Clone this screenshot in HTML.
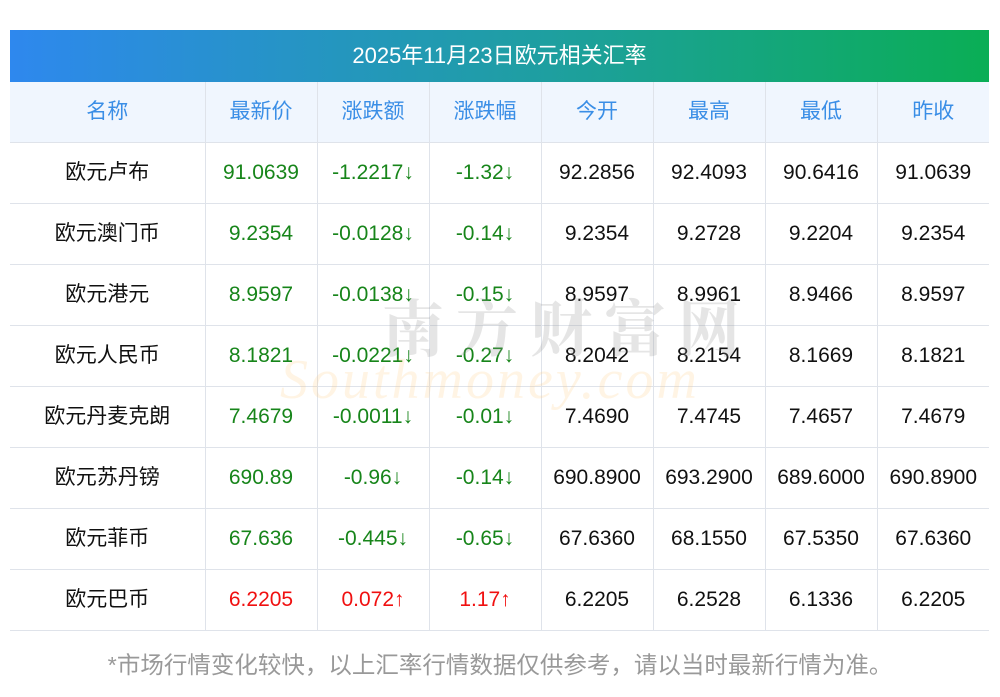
<!DOCTYPE html>
<html><head><meta charset="utf-8"><style>
body{margin:0;background:#fff;width:1000px;height:697px;overflow:hidden;font-family:"Liberation Sans","Noto Sans CJK SC",sans-serif;position:relative}
.hd{position:absolute;left:10px;top:30px;width:979px;height:52px;background:linear-gradient(90deg,#2e88ee,#1e9fa0 55%,#0aae55);color:#fff;font-size:22px;line-height:52px;text-align:center}
table{position:absolute;left:10px;top:82px;border-collapse:collapse;width:979px;table-layout:fixed}
td{height:60px;border:1px solid #dfe3ea;text-align:center;font-size:21px;line-height:24px;padding:0;color:#111;white-space:nowrap}
tr:first-child td{background:#f0f6fe;color:#3a8ee6;border-top:none}
td:first-child{border-left:none}td:last-child{border-right:none}
.g{color:#17851a}.r{color:#f01010}
.wm{position:absolute;left:382px;top:290px;font-size:62px;line-height:70px;color:rgba(150,150,150,.25);letter-spacing:12px;font-family:"Noto Serif CJK SC",serif;font-weight:bold}
.wm2{position:absolute;left:280px;top:345px;font-size:56px;line-height:70px;color:rgba(255,200,120,.2);font-style:italic;font-family:"Liberation Serif",serif;letter-spacing:3px}
.ft{position:absolute;left:0;width:1000px;top:650px;text-align:center;color:#999;font-size:23.5px;line-height:30px}
</style></head><body>
<div class="hd">2025年11月23日欧元相关汇率</div>
<table>
<colgroup><col style="width:195px"><col style="width:112px"><col style="width:112px"><col style="width:112px"><col style="width:112px"><col style="width:112px"><col style="width:112px"><col style="width:112px"></colgroup>
<tr><td>名称</td><td>最新价</td><td>涨跌额</td><td>涨跌幅</td><td>今开</td><td>最高</td><td>最低</td><td>昨收</td></tr>
<tr><td>欧元卢布</td><td class="g">91.0639</td><td class="g">-1.2217↓</td><td class="g">-1.32↓</td><td>92.2856</td><td>92.4093</td><td>90.6416</td><td>91.0639</td></tr>
<tr><td>欧元澳门币</td><td class="g">9.2354</td><td class="g">-0.0128↓</td><td class="g">-0.14↓</td><td>9.2354</td><td>9.2728</td><td>9.2204</td><td>9.2354</td></tr>
<tr><td>欧元港元</td><td class="g">8.9597</td><td class="g">-0.0138↓</td><td class="g">-0.15↓</td><td>8.9597</td><td>8.9961</td><td>8.9466</td><td>8.9597</td></tr>
<tr><td>欧元人民币</td><td class="g">8.1821</td><td class="g">-0.0221↓</td><td class="g">-0.27↓</td><td>8.2042</td><td>8.2154</td><td>8.1669</td><td>8.1821</td></tr>
<tr><td>欧元丹麦克朗</td><td class="g">7.4679</td><td class="g">-0.0011↓</td><td class="g">-0.01↓</td><td>7.4690</td><td>7.4745</td><td>7.4657</td><td>7.4679</td></tr>
<tr><td>欧元苏丹镑</td><td class="g">690.89</td><td class="g">-0.96↓</td><td class="g">-0.14↓</td><td>690.8900</td><td>693.2900</td><td>689.6000</td><td>690.8900</td></tr>
<tr><td>欧元菲币</td><td class="g">67.636</td><td class="g">-0.445↓</td><td class="g">-0.65↓</td><td>67.6360</td><td>68.1550</td><td>67.5350</td><td>67.6360</td></tr>
<tr><td>欧元巴币</td><td class="r">6.2205</td><td class="r">0.072↑</td><td class="r">1.17↑</td><td>6.2205</td><td>6.2528</td><td>6.1336</td><td>6.2205</td></tr>
</table>
<div class="wm">南方财富网</div>
<div class="wm2">Southmoney.com</div>
<div class="ft">*市场行情变化较快，以上汇率行情数据仅供参考，请以当时最新行情为准。</div>
</body></html>
